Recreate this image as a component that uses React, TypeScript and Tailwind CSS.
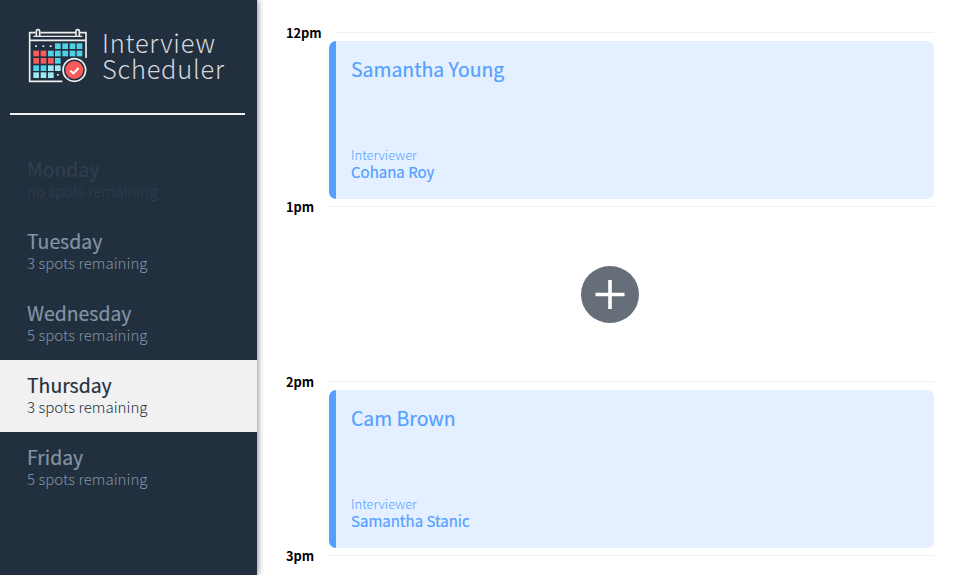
type Day = { name: string; spots: string; state?: 'selected' | 'full' };
type Interview = { student: string; interviewer: string };

const days: Day[] = [
  { name: 'Monday', spots: 'no spots remaining', state: 'full' },
  { name: 'Tuesday', spots: '3 spots remaining' },
  { name: 'Wednesday', spots: '5 spots remaining' },
  { name: 'Thursday', spots: '3 spots remaining', state: 'selected' },
  { name: 'Friday', spots: '5 spots remaining' },
];

const cells: [number, number, string][] = [
  [105, 70, '#4fd1e8'], [127, 70, '#4fd1e8'], [149, 70, '#4fd1e8'], [170, 70, '#4fd1e8'],
  [40, 92, '#fb5a5a'], [62, 92, '#fb5a5a'], [84, 92, '#4fd1e8'], [105, 92, '#4fd1e8'],
  [127, 92, '#4fd1e8'], [149, 92, '#4fd1e8'], [170, 92, '#4fd1e8'],
  [40, 114, '#fb5a5a'], [62, 114, '#fb5a5a'], [84, 114, '#fb5a5a'], [105, 114, '#4fd1e8'],
  [40, 136, '#4fd1e8'], [62, 136, '#4fd1e8'], [84, 136, '#9be8f4'], [105, 136, '#9be8f4'],
  [40, 157, '#9be8f4'], [62, 157, '#9be8f4'], [84, 157, '#9be8f4'],
];

function CalendarLogo() {
  return (
    <svg className="h-[70px] w-[80px] shrink-0" viewBox="0 0 240 210" fill="none">
      <path d="M127 184H29V38H47M61 38H166M180 38H198V114" stroke="#ededed" strokeWidth="5" />
      <path d="M29 61H198" stroke="#ededed" strokeWidth="5" />
      <path d="M40 49H187" stroke="#ededed" strokeWidth="4" />
      <path d="M49 49V34a5 5 0 0 1 10 0V49M168 49V34a5 5 0 0 1 10 0V49" stroke="#ededed" strokeWidth="5" />
      {cells.map(([x, y, fill]) => (
        <rect key={`${x}-${y}`} x={x} y={y} width="17" height="17" fill={fill} />
      ))}
      {[48, 70, 92].map((x) => (
        <rect key={x} x={x - 2.5} y="76" width="5" height="5" fill="#fff" />
      ))}
      <rect x="111" y="162" width="5" height="5" fill="#fff" />
      <circle cx="163" cy="150" r="37" fill="#222f3e" />
      <circle cx="163" cy="150" r="34" stroke="#ededed" strokeWidth="5" />
      <circle cx="163" cy="150" r="27" fill="#fb5a5a" />
      <path d="M151 152L160 160L176 144" stroke="#fff" strokeWidth="6" />
    </svg>
  );
}

function DayItem({ day }: { day: Day }) {
  const tone =
    day.state === 'selected'
      ? 'bg-[#f1f1f1] text-[#222f3e]'
      : day.state === 'full'
        ? 'text-[#313f4e]'
        : 'text-[#8395a7]';
  return (
    <li className={`flex h-[72px] flex-col pt-[13px] pl-[27px] ${tone}`}>
      <h2 className="text-[19.4px] leading-[24px] font-normal [-webkit-text-stroke:0.2px]">{day.name}</h2>
      <h3 className="text-[15.1px] leading-[18px] font-light">{day.spots}</h3>
    </li>
  );
}

function Hour({ time, first }: { time: string; first?: boolean }) {
  return (
    <div className="flex h-[20px] shrink-0 items-start">
      <h4 className={`${first ? 'w-[49px]' : 'w-[42px]'} text-[12.8px] leading-[20px] font-bold text-black`}>{time}</h4>
      <hr className="mt-[9px] h-px flex-1 border-0 bg-[#f1f1f1]" />
    </div>
  );
}

function Card({ interview }: { interview: Interview }) {
  return (
    <article className="-mt-[2px] ml-[43px] flex h-[158px] shrink-0 flex-col rounded-[7px] border-l-[7px] border-[#549fff] bg-[#e4f0ff] pl-[15px] text-[#549fff]">
      <h2 className="mt-[16px] text-[19.4px] leading-[24px] font-normal [-webkit-text-stroke:0.2px]">{interview.student}</h2>
      <h4 className="mt-[65px] text-[12.9px] leading-[18px] font-light">Interviewer</h4>
      <h3 className="text-[15px] leading-[15px] font-normal [-webkit-text-stroke:0.2px]">{interview.interviewer}</h3>
    </article>
  );
}

export default function App() {
  return (
    <main className="flex h-[575px] w-[961px] overflow-hidden bg-white font-['Noto_Sans_CJK_SC',sans-serif]">
      <section className="z-10 flex w-[257px] shrink-0 flex-col bg-[#222f3e] shadow-[1px_0_6px_rgba(0,0,0,0.45)]">
        <div className="flex h-[113px] pt-[20px] pl-[20px]">
          <CalendarLogo />
          <div className="pt-[9px] pl-[2px] text-[25.4px] leading-[26px] font-light tracking-[0.78px] text-[#d5d8dc]">
            <div>Interview</div>
            <div>Scheduler</div>
          </div>
        </div>
        <hr className="ml-[10px] h-[2px] w-[235px] border-0 bg-[#f1f1f1]" />
        <nav className="mt-[29px]">
          <ul>
            {days.map((day) => (
              <DayItem key={day.name} day={day} />
            ))}
          </ul>
        </nav>
      </section>
      <section className="flex w-[677px] shrink-0 flex-col pt-[23px] pl-[29px]">
        <div className="flex h-[174px] flex-col">
          <Hour time="12pm" first />
          <Card interview={{ student: 'Samantha Young', interviewer: 'Cohana Roy' }} />
        </div>
        <div className="flex h-[175px] flex-col">
          <Hour time="1pm" />
          <button className="mt-[49px] ml-[295px] size-[58px]" aria-label="Add appointment">
            <svg viewBox="0 0 58 58" className="size-[58px]">
              <ellipse cx="29" cy="28.5" rx="29" ry="28.5" fill="#666e7a" />
              <path d="M29 14V43M14.5 28.5H43.5" stroke="#fff" strokeWidth="3.6" />
            </svg>
          </button>
        </div>
        <div className="flex h-[174px] flex-col">
          <Hour time="2pm" />
          <Card interview={{ student: 'Cam Brown', interviewer: 'Samantha Stanic' }} />
        </div>
        <Hour time="3pm" />
      </section>
    </main>
  );
}
